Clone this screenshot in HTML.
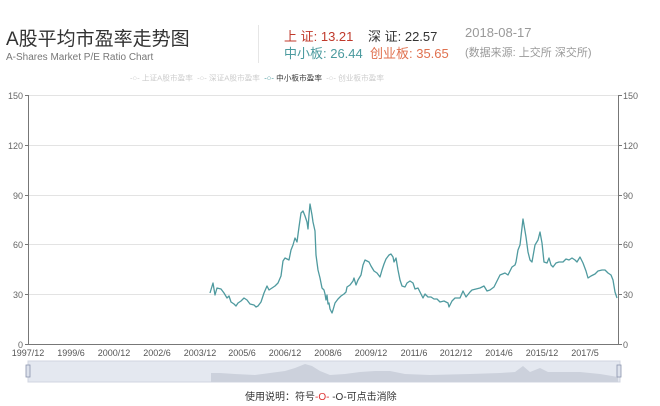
<!DOCTYPE html><html><head><meta charset="utf-8"><style>
body{margin:0;width:660px;height:406px;background:#fff;overflow:hidden;font-family:"Liberation Sans","Noto Sans CJK SC",sans-serif;position:relative}
.a{position:absolute;white-space:nowrap}
</style></head><body>
<div class="a" style="left:6px;top:24px;font-size:19px;color:#333">A股平均市盈率走势图</div>
<div class="a" style="left:6px;top:52px;font-size:10px;color:#777">A-Shares Market P/E Ratio Chart</div>
<div class="a" style="left:258px;top:25px;width:1px;height:38px;background:#e6e6e6"></div>
<div class="a" style="left:284px;top:26px;font-size:13px;color:#c0392b">上 证: 13.21</div>
<div class="a" style="left:368px;top:26px;font-size:13px;color:#333">深 证: 22.57</div>
<div class="a" style="left:465px;top:25px;font-size:13px;color:#999">2018-08-17</div>
<div class="a" style="left:284px;top:43px;font-size:13px;color:#4a9a9e">中小板: 26.44</div>
<div class="a" style="left:370px;top:43px;font-size:13px;color:#e0714f">创业板: 35.65</div>
<div class="a" style="left:465px;top:44px;font-size:11px;color:#999">(数据来源: 上交所 深交所)</div>
<div class="a" style="left:130px;top:72px;font-size:9px;color:#ccc;transform:scale(.85);transform-origin:0 0">
<span>-○- 上证A股市盈率</span>&nbsp; <span>-○- 深证A股市盈率</span>&nbsp; <span style="color:#4a9a9e">-○- </span><span style="color:#333">中小板市盈率</span>&nbsp; <span>-○- 创业板市盈率</span></div>
<svg class="a" style="left:0;top:0" width="660" height="406">
<g stroke="#e3e3e3" stroke-width="1">
<line x1="28" x2="618" y1="95.5" y2="95.5"/><line x1="28" x2="618" y1="145.5" y2="145.5"/><line x1="28" x2="618" y1="195.5" y2="195.5"/><line x1="28" x2="618" y1="244.5" y2="244.5"/><line x1="28" x2="618" y1="294.5" y2="294.5"/>
</g>
<g stroke="#777" stroke-width="1">
<line x1="28.5" x2="28.5" y1="95" y2="344"/><line x1="618.5" x2="618.5" y1="95" y2="344"/><line x1="28" x2="619" y1="344.5" y2="344.5"/>
<line x1="25" x2="28" y1="95.5" y2="95.5"/><line x1="25" x2="28" y1="145.5" y2="145.5"/><line x1="25" x2="28" y1="195.5" y2="195.5"/><line x1="25" x2="28" y1="244.5" y2="244.5"/><line x1="25" x2="28" y1="294.5" y2="294.5"/><line x1="25" x2="28" y1="344.5" y2="344.5"/>
<line x1="619" x2="622" y1="95.5" y2="95.5"/><line x1="619" x2="622" y1="145.5" y2="145.5"/><line x1="619" x2="622" y1="195.5" y2="195.5"/><line x1="619" x2="622" y1="244.5" y2="244.5"/><line x1="619" x2="622" y1="294.5" y2="294.5"/><line x1="619" x2="622" y1="344.5" y2="344.5"/>
</g>
<g font-size="9" fill="#666" text-anchor="end">
<text x="23" y="99">150</text><text x="23" y="149">120</text><text x="23" y="199">90</text><text x="23" y="248">60</text><text x="23" y="298">30</text><text x="23" y="348">0</text></g>
<g font-size="9" fill="#666">
<text x="623" y="99">150</text><text x="623" y="149">120</text><text x="623" y="199">90</text><text x="623" y="248">60</text><text x="623" y="298">30</text><text x="623" y="348">0</text></g>
<g font-size="9" fill="#555" text-anchor="middle">
<text x="28" y="356">1997/12</text><text x="71" y="356">1999/6</text><text x="114" y="356">2000/12</text><text x="157" y="356">2002/6</text><text x="200" y="356">2003/12</text><text x="242" y="356">2005/6</text><text x="285" y="356">2006/12</text><text x="328" y="356">2008/6</text><text x="371" y="356">2009/12</text><text x="414" y="356">2011/6</text><text x="456" y="356">2012/12</text><text x="499" y="356">2014/6</text><text x="542" y="356">2015/12</text><text x="585" y="356">2017/5</text></g>
<polyline fill="none" stroke="#4f9a9f" stroke-width="1.3" stroke-linejoin="round" points="210,293 213,283 215,295 217,288 221,289 224,293 227,298 229,296 231,302 234,304 236,306 238,303 241,301 244,298 247,300 250,304 254,305 256,307 258,306 261,302 264,293 267,286 269,290 272,288 275,286 278,283 281,276 283,261 285,258 289,260 291,250 293,245 295,238 297,242 299,227 301,213 303,211 305,216 307,222 308,229 309,215 310,204 312,215 313,222 315,231 316,255 318,270 320,278 322,288 324,290 325,294 326,300 327,295 328,304 329,303 330,309 332,313 333,310 335,303 338,299 341,296 344,294 346,292 347,287 350,285 353,281 354,278 356,285 358,280 361,275 363,265 365,260 367,261 369,262 371,266 374,271 377,273 380,277 382,270 384,264 386,259 389,255 391,254 393,257 394,262 396,258 398,270 400,280 402,286 405,287 407,283 410,281 413,283 415,289 418,288 421,294 423,298 425,294 428,297 431,297 434,299 437,299 440,302 444,301 448,303 449,307 452,301 455,298 460,298 463,291 466,297 470,292 472,290 476,289 480,288 484,286 487,291 490,290 494,287 496,283 500,275 505,273 508,275 512,267 515,265 516,262 518,250 520,245 523,219 526,237 528,252 530,260 532,262 535,245 538,240 540,232 542,243 544,262 547,263 549,258 551,265 553,267 556,263 559,262 563,262 566,259 569,260 572,258 575,260 577,262 580,257 583,263 586,271 588,278 591,276 595,274 598,271 602,270 605,270 608,273 611,275 613,280 615,292 617,298"/>
<rect x="28" y="361" width="592" height="21" fill="#e4e8f0" stroke="#d0d5e0"/>
<polygon fill="#ccd1dc" points="211,382 211,373 220,373 235,374 255,375 270,373 285,371 295,368 305,364 312,366 320,371 330,375 345,374 360,372 375,371 390,371 405,374 430,375 470,374 500,373 515,372 523,366 530,372 540,368 548,372 580,372 600,374 618,377 618,382"/>
<rect x="26" y="365" width="4" height="12" fill="#dde2ec" stroke="#8a94ad" stroke-width=".8"/>
<rect x="617" y="365" width="4" height="12" fill="#dde2ec" stroke="#8a94ad" stroke-width=".8"/>
</svg>
<div class="a" style="left:245px;top:388px;font-size:10px;color:#333">使用说明：符号<span style="color:#d33">-O-</span> -O-可点击消除</div>
</body></html>
